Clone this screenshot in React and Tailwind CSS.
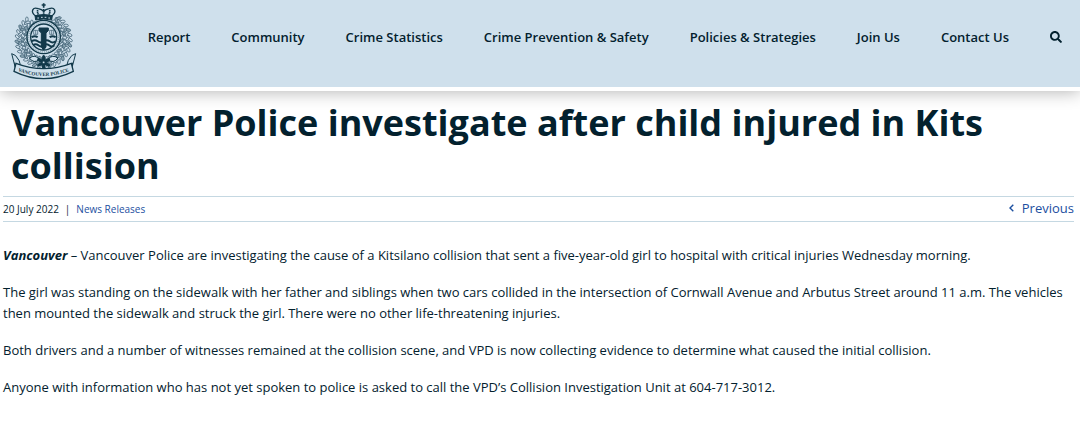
import { FaSearch } from "react-icons/fa";

const links = [
  "Report",
  "Community",
  "Crime Statistics",
  "Crime Prevention & Safety",
  "Policies & Strategies",
  "Join Us",
  "Contact Us",
];

// leaves of the wreath, left open at the top for the crown
const leaves = [];
[56, 64, 72, 80].forEach((r, ring) => {
  for (let a = -64 + ring * 3; a <= 244 - ring * 3; a += 11) {
    leaves.push({ a, r, tilt: ring % 2 ? 40 : -40 });
  }
});

const Crest = () => {
  return (
    <svg viewBox="30 6 204 234" className="h-[78px] w-[68px]" fill="none" stroke="#12394a" strokeWidth="3" role="img" aria-label="Vancouver Police">
      <g stroke="#34566a" strokeWidth="2">
        {leaves.map((l, i) => (
          <ellipse
            key={i}
            rx="7"
            ry="4"
            fill={i % 3 ? "#cfe0ec" : "#8ba5b3"}
            transform={`translate(131 120) rotate(${l.a}) translate(${l.r} 0) rotate(${l.tilt})`}
          />
        ))}
      </g>
      <circle cx="131" cy="111" r="50" fill="#cfe0ec" strokeWidth="4" />
      <circle cx="131" cy="111" r="45" stroke="#8ba5b3" strokeWidth="4" strokeDasharray="3 3" />
      <circle cx="131" cy="111" r="39" strokeWidth="4" />
      <path d="M95 112q9-7 18 0M149 112q9-7 18 0M95 124q9-7 18 0t18 0t18 0t18 0M99 136q8-7 16 0t16 0t16 0t16 0" strokeWidth="6" />
      <path d="M117 84h28v8l-7 7v42l-7 9l-7-9V99l-7-7z" fill="#12394a" />
      <path d="M101 91h12v12h-12zM149 91h12v12h-12zM107 91v12M155 91v12" stroke="#34566a" strokeWidth="2" />
      {/* crown */}
      <path d="M131 10v13M125 15h12" strokeWidth="5" />
      <path d="M107 48c-18-14-8-28 8-22q10 2 16 8q6-6 16-8c16-6 26 8 8 22z" fill="#cfe0ec" strokeWidth="4" />
      <path d="M131 27v20M113 30q-2 10 5 18M149 30q2 10-5 18" strokeWidth="5" strokeDasharray="4 1" />
      <path d="M105 47q26-7 52 0l-2 13q-24-6-48 0z" fill="#12394a" />
      <path d="M112 54h5M123 52h5M134 52h5M145 54h5" stroke="#cfe0ec" />
      {/* flower above the ribbon */}
      <path d="M88 174q18-12 30 4q-16 15-30-4zM174 174q-18-12-30 4q16 15 30-4z" fill="#cfe0ec" />
      <g fill="#12394a" stroke="none">
        {[0, 60, 120, 180, 240, 300].map((a) => (
          <ellipse key={a} cx="131" cy="176" rx="5" ry="11" transform={`rotate(${a} 131 187)`} />
        ))}
      </g>
      <circle cx="131" cy="187" r="4" fill="#cfe0ec" />
      {/* ribbon */}
      <path d="M44 188L47 207L35 161Q47 162 57 181L61 194M218 188L215 207L227 161Q215 162 205 181L201 194" fill="#cfe0ec" />
      <path d="M48 190Q131 222 214 190L220 214Q131 258 42 214z" fill="#cfe0ec" strokeWidth="4" />
      <path id="ribbon-line" d="M46 210Q131 246 216 210" stroke="none" />
      <text fill="#12394a" stroke="none" className="font-['Liberation_Serif',serif] text-[15px] font-bold">
        <textPath href="#ribbon-line" startOffset="50%" textAnchor="middle">VANCOUVER POLICE</textPath>
      </text>
    </svg>
  );
};

const Navbar = () => {
  return (
    <header className="relative border-b-4 border-white bg-[#cfe0ec] shadow-[0_1px_16px_rgba(0,0,0,0.3)]">
      <div className="flex h-[87px] items-start justify-between pl-[10px] pr-[18px] pt-[2px]">
        <a href="#"><Crest /></a>
        <nav className="flex items-center gap-[41px] pt-[25px] text-[13px] leading-5 font-semibold whitespace-nowrap">
          {links.map((link) => (
            <a key={link} href="#">{link}</a>
          ))}
          <button type="button" aria-label="Search"><FaSearch className="size-3" /></button>
        </nav>
      </div>
    </header>
  );
};

const App = () => {
  return (
    <div className="bg-white font-['Open_Sans',sans-serif] text-[#03212e]">
      <Navbar />
      <main className="pl-[3px] pr-[6px]">
        <h1 className="px-2 pt-[10px] pb-[9px] text-[36px] leading-[43px] font-bold">
          Vancouver Police investigate after child injured in Kits collision
        </h1>
        <div className="flex h-[26px] items-start justify-between border-y border-[#c5d8e2]">
          <p className="flex gap-[6px] pt-[2px] text-[10px] leading-5">
            <span>20 July 2022</span>
            <span>|</span>
            <a href="#" className="text-[#1c4f9f]">News Releases</a>
          </p>
          <a href="#" className="flex items-center gap-2 pt-px text-[13px] leading-5 text-[#1c4f9f]">
            <svg viewBox="0 0 5 8" className="h-2 w-[5px]" fill="none" stroke="currentColor" strokeWidth="1.4">
              <path d="M4.3.8L1 4l3.3 3.2" />
            </svg>
            Previous
          </a>
        </div>
        <article className="flex flex-col gap-4 pt-[23px] pb-6 text-[13px] leading-[21px]">
          <p>
            <strong><em>Vancouver</em></strong> – Vancouver Police are investigating the cause of a Kitsilano collision that sent a five-year-old girl to hospital with critical injuries Wednesday morning.
          </p>
          <p>
            The girl was standing on the sidewalk with her father and siblings when two cars collided in the intersection of Cornwall Avenue and Arbutus Street around 11 a.m. The vehicles then mounted the sidewalk and struck the girl. There were no other life-threatening injuries.
          </p>
          <p>
            Both drivers and a number of witnesses remained at the collision scene, and VPD is now collecting evidence to determine what caused the initial collision.
          </p>
          <p>
            Anyone with information who has not yet spoken to police is asked to call the VPD’s Collision Investigation Unit at 604-717-3012.
          </p>
        </article>
      </main>
    </div>
  );
};

export default App;
